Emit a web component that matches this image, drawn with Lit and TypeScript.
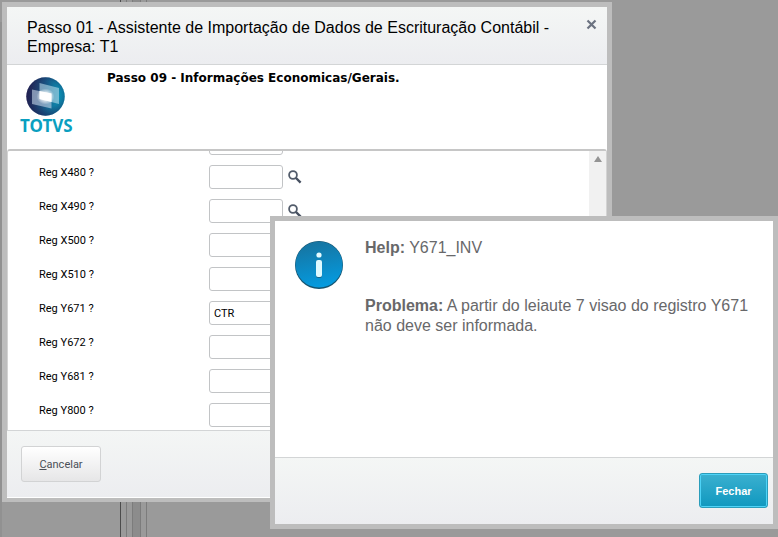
import { LitElement, html, css, svg } from "lit";
import { customElement } from "lit/decorators.js";

interface Field {
  name: string;
  value: string;
}

const fields: Field[] = [
  { name: "X480", value: "" },
  { name: "X490", value: "" },
  { name: "X500", value: "" },
  { name: "X510", value: "" },
  { name: "Y671", value: "CTR" },
  { name: "Y672", value: "" },
  { name: "Y681", value: "" },
  { name: "Y800", value: "" },
];

const lens = html`<svg width="14" height="14" viewBox="0 0 14 14" aria-hidden="true">
  ${svg`<circle cx="5" cy="5" r="3.9" fill="none" stroke="#525c6b" stroke-width="1.8"/>
  <path d="M8 8L12.6 12.6" stroke="#465060" stroke-width="2.4"/>`}
</svg>`;

@customElement("app-root")
export class AppRoot extends LitElement {
  static styles = css`
    :host {
      display: block;
      position: relative;
      min-height: 100vh;
      overflow: hidden;
      background: #9a9a9a;
      font-family: "Liberation Sans", Arial, sans-serif;
      color: #000;
    }
    * {
      box-sizing: border-box;
    }
    h1,
    h2,
    p {
      margin: 0;
      font-weight: normal;
    }
    .desk-edge {
      position: absolute;
      left: 0;
      top: 22px;
      bottom: 0;
      width: 2px;
      background: #919191;
    }
    .desk-lines {
      position: absolute;
      left: 120px;
      top: 0;
      bottom: 0;
      width: 27px;
      border-left: 1px solid #4c4c4c;
      border-right: 1px solid #7c7c7c;
      display: flex;
      padding-left: 5px;
    }
    .desk-lines i {
      border-left: 1px solid #7c7c7c;
      width: 6px;
    }
    .desk-lines i + i {
      width: 9px;
      border-right: 1px solid #7c7c7c;
      background: #8c8c8c;
    }
    .window {
      position: absolute;
      border: 5px solid #bdbdbd;
      background: #fff;
    }
    .wizard {
      left: 2px;
      top: 2px;
      right: 166px;
      padding-bottom: 1px;
      border-bottom-width: 4px;
    }
    .titlebar {
      display: flex;
      justify-content: space-between;
      align-items: flex-start;
      padding: 11px 10px 8px 20px;
      border-bottom: 1px solid #d3d5d6;
      background: linear-gradient(#f4f6f5, #ecedf0);
    }
    .titlebar h1 {
      font-size: 16px;
      line-height: 19px;
    }
    button {
      font-family: Roboto, sans-serif;
      font-size: 11px;
      margin: 0;
      cursor: pointer;
    }
    .icon-button {
      display: flex;
      border: 0;
      padding: 0;
      background: none;
    }
    .intro {
      display: flex;
      height: 84px;
      padding: 5px 13px;
    }
    .logo {
      width: 60px;
      margin-right: 27px;
      padding-top: 7px;
    }
    .logo svg {
      display: block;
      margin-left: 6px;
    }
    .logo span {
      display: block;
      font: bold 17px/20px "Noto Sans", sans-serif;
      color: #0a9fc0;
    }
    .intro h2 {
      font: bold 12px/16px "DejaVu Sans", Verdana, sans-serif;
    }
    .panel {
      display: flex;
      height: 281px;
      border: 1px solid #d3d3d3;
      border-top: 2px solid #c6c6c6;
      border-bottom: 0;
      border-radius: 3px 3px 0 0;
      overflow: hidden;
    }
    .fields {
      flex: 1;
      display: flex;
      flex-direction: column;
      justify-content: flex-end;
      overflow: hidden;
    }
    .field {
      flex: none;
      display: grid;
      grid-template-columns: 170px 74px auto;
      justify-content: start;
      align-items: center;
      height: 34px;
      padding: 7px 0 3px 31px;
    }
    .field label {
      align-self: start;
      font: 11px/16px Roboto, sans-serif;
    }
    .field input {
      width: 74px;
      height: 24px;
      border: 1px solid #c2c4c6;
      border-radius: 3px;
      padding: 0 4px;
      background: #fff;
      color: #000;
      font: 11px/16px Roboto, sans-serif;
    }
    .field .icon-button {
      margin-left: 5px;
    }
    .scroll {
      width: 17px;
      background: #f1f1f1;
      display: flex;
      justify-content: center;
      padding-top: 5px;
    }
    .footer {
      display: flex;
      border-top: 1px solid #d3d5d6;
      background: linear-gradient(#f4f6f5, #ecedf0);
      padding: 15px 14px;
    }
    .cancel {
      width: 80px;
      height: 36px;
      border: 1px solid #d2d3d4;
      border-radius: 3px;
      background: linear-gradient(#fff, #e6e6e7);
      color: #4a4f57;
    }
    .help {
      left: 270px;
      top: 216px;
      right: 0;
    }
    .message {
      display: flex;
      gap: 22px;
      min-height: 236px;
      padding: 17px 20px;
      font-size: 16px;
      line-height: 20px;
      color: #68686a;
    }
    .message svg {
      flex: none;
      margin-top: 3px;
    }
    .message p + p {
      margin-top: 38px;
    }
    .actions {
      justify-content: flex-end;
      padding: 15px 5px;
    }
    .close {
      width: 69px;
      height: 35px;
      margin-bottom: 1px;
      border: 1px solid #2b9dbb;
      border-radius: 3px;
      background: linear-gradient(#3bb0d0, #0f98bf);
      box-shadow: inset 0 0 0 1px #4ed3f7;
      color: #fff;
      font-family: "Liberation Sans", Arial, sans-serif;
      font-weight: bold;
    }
  `;

  private row(f: Field) {
    const id = `reg-${f.name}`;
    return html`<div class="field">
      <label for=${id}>Reg ${f.name} ?</label>
      <input id=${id} type="text" .value=${f.value} />
      <button class="icon-button" aria-label="Pesquisar ${f.name}">${lens}</button>
    </div>`;
  }

  render() {
    return html`
      <div class="desk-edge"></div>
      <div class="desk-lines"><i></i><i></i></div>
      <section class="window wizard">
        <header class="titlebar">
          <h1>Passo 01 - Assistente de Importação de Dados de Escrituração Contábil - Empresa: T1</h1>
          <button class="icon-button" aria-label="Fechar janela">
            <svg width="11" height="13" viewBox="0 0 11 13">
              <path d="M1.5 2.5L9.5 10.5M9.5 2.5L1.5 10.5" stroke="#6b7280" stroke-width="2.2" />
            </svg>
          </button>
        </header>
        <div class="intro">
          <div class="logo">
            <svg width="39" height="39" viewBox="0 0 39 39" aria-hidden="true">
              <defs>
                <linearGradient id="ball" x1="0" y1=".4" x2="1" y2=".5">
                  <stop offset="0" stop-color="#241f4e" />
                  <stop offset=".45" stop-color="#1a4f7e" />
                  <stop offset="1" stop-color="#07a3c4" />
                </linearGradient>
                <radialGradient id="shade" cx=".5" cy=".45" r=".55">
                  <stop offset=".65" stop-color="#1b2458" stop-opacity="0" />
                  <stop offset="1" stop-color="#1b2458" stop-opacity=".55" />
                </radialGradient>
                <radialGradient id="glow">
                  <stop offset=".3" stop-color="#fff" />
                  <stop offset="1" stop-color="#fff" stop-opacity="0" />
                </radialGradient>
              </defs>
              <circle cx="19.5" cy="19.5" r="19.2" fill="url(#ball)" />
              <circle cx="19.5" cy="19.5" r="19.2" fill="url(#shade)" />
              <path d="M13.5 6L33 11V27L13.5 22Z" fill="#b5dbea" fill-opacity=".6" />
              <path d="M6 12.5L25.5 16.5V31.5L6 27Z" fill="#c4d3e8" fill-opacity=".6" />
              <ellipse cx="19.5" cy="19.5" rx="9" ry="8" fill="url(#glow)" />
              <path d="M13.5 14L25.5 16.5V25L13.5 22Z" fill="#fff" />
            </svg>
            <span>TOTVS</span>
          </div>
          <h2>Passo 09 - Informações Economicas/Gerais.</h2>
        </div>
        <div class="panel">
          <div class="fields">
            <div class="field">
              <span></span>
              <input type="text" aria-label="Reg anterior" />
            </div>
            ${fields.map((f) => this.row(f))}
          </div>
          <div class="scroll">
            <svg width="8" height="6" viewBox="0 0 8 6" aria-hidden="true">
              <path d="M4 0L8 6H0Z" fill="#949494" />
            </svg>
          </div>
        </div>
        <footer class="footer">
          <button class="cancel"><u>C</u>ancelar</button>
        </footer>
      </section>

      <section class="window help" role="dialog" aria-label="Help">
        <div class="message">
          <svg width="48" height="48" viewBox="0 0 48 48" aria-hidden="true">
            <defs>
              <linearGradient id="info" x1=".3" y1="0" x2=".5" y2="1">
                <stop offset="0" stop-color="#17739f" />
                <stop offset="1" stop-color="#049be0" />
              </linearGradient>
            </defs>
            <circle cx="24" cy="24" r="24" fill="#155470" />
            <ellipse cx="24" cy="23.5" rx="23.5" ry="23" fill="url(#info)" />
            <circle cx="24" cy="14" r="2.6" fill="#e6fbff" />
            <rect x="21" y="19" width="6" height="18" rx="2.5" fill="#17658a" />
            <rect x="21" y="19" width="6" height="17" rx="2" fill="#dffaff" />
          </svg>
          <div>
            <p><b>Help:</b> Y671_INV</p>
            <p><b>Problema:</b> A partir do leiaute 7 visao do registro Y671 não deve ser informada.</p>
          </div>
        </div>
        <footer class="footer actions">
          <button class="close">Fechar</button>
        </footer>
      </section>
    `;
  }
}
